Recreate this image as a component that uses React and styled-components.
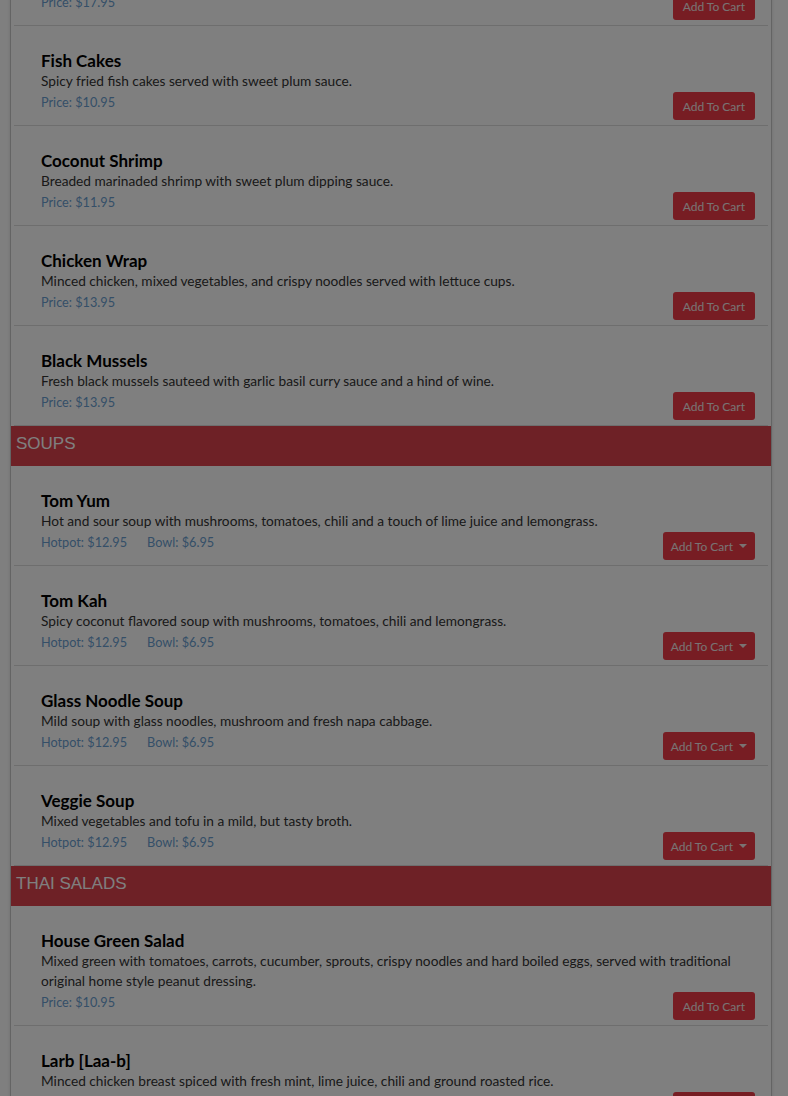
import React from 'react';
import styled, { createGlobalStyle } from 'styled-components';

const GlobalStyle = createGlobalStyle`
  html, body {
    margin: 0;
    padding: 0;
    background: #fff;
    overflow: hidden;
  }
  body {
    font-family: Lato, "Open Sans", sans-serif;
    color: #333;
  }
`;

const Page = styled.div`
  width: 788px;
  height: 1096px;
  overflow: hidden;
  position: relative;
`;

/* page is scrolled part way down the menu */
const MenuCard = styled.div`
  margin: -74px 0 0 10px;
  width: 760px;
  border-left: 1px solid #c8c8c8;
  border-right: 1px solid #c8c8c8;
  box-shadow: 0 0 4px rgba(0, 0, 0, 0.12);
  background: #fff;
`;

const CategoryHeader = styled.div`
  background: #dc424c;
  color: #fff;
  height: 40px;
  padding: 8px 5px 0;
  box-sizing: border-box;
  font-family: "Liberation Sans", Arial, sans-serif;
  font-size: 17px;
  line-height: 20px;
`;

const Item = styled.div`
  margin: 0 3px;
  padding: 25px 13px 5px 27px;
  border-bottom: 1px solid #dcdcdc;
`;

const Title = styled.div`
  font-size: 17px;
  font-weight: 700;
  line-height: 20px;
  color: #000;
`;

const Desc = styled.div`
  font-size: 13.7px;
  line-height: 20px;
  color: #333;
`;

const Row = styled.div`
  display: flex;
  justify-content: space-between;
  align-items: flex-start;
  margin-top: 1px;
  height: 28px;
`;

const Prices = styled.div`
  display: flex;
  gap: 20px;
  font-size: 12.7px;
  line-height: 20px;
  color: #6a9ed0;
`;

const CartButton = styled.button`
  display: flex;
  align-items: center;
  height: 28px;
  padding: 0 ${(p) => (p.$menu ? 8 : 10)}px;
  border: none;
  border-radius: 3px;
  background: #ee3a46;
  color: #f2e6e6;
  font-family: inherit;
  font-size: 12px;
  cursor: pointer;
`;

const Caret = styled.span`
  width: 0;
  height: 0;
  margin-left: 6px;
  border-top: 4px solid #f2e6e6;
  border-left: 4px solid transparent;
  border-right: 4px solid transparent;
`;

const Backdrop = styled.div`
  position: fixed;
  inset: 0;
  background: rgba(0, 0, 0, 0.5);
`;

const menu = [
  {
    items: [
      { name: 'Crispy Duck Rolls', desc: 'Crispy rolls with duck and vegetables.', prices: ['Price: $17.95'] },
      { name: 'Fish Cakes', desc: 'Spicy fried fish cakes served with sweet plum sauce.', prices: ['Price: $10.95'] },
      { name: 'Coconut Shrimp', desc: 'Breaded marinaded shrimp with sweet plum dipping sauce.', prices: ['Price: $11.95'] },
      { name: 'Chicken Wrap', desc: 'Minced chicken, mixed vegetables, and crispy noodles served with lettuce cups.', prices: ['Price: $13.95'] },
      { name: 'Black Mussels', desc: 'Fresh black mussels sauteed with garlic basil curry sauce and a hind of wine.', prices: ['Price: $13.95'] },
    ],
  },
  {
    title: 'SOUPS',
    items: [
      { name: 'Tom Yum', desc: 'Hot and sour soup with mushrooms, tomatoes, chili and a touch of lime juice and lemongrass.', prices: ['Hotpot: $12.95', 'Bowl: $6.95'] },
      { name: 'Tom Kah', desc: 'Spicy coconut flavored soup with mushrooms, tomatoes, chili and lemongrass.', prices: ['Hotpot: $12.95', 'Bowl: $6.95'] },
      { name: 'Glass Noodle Soup', desc: 'Mild soup with glass noodles, mushroom and fresh napa cabbage.', prices: ['Hotpot: $12.95', 'Bowl: $6.95'] },
      { name: 'Veggie Soup', desc: 'Mixed vegetables and tofu in a mild, but tasty broth.', prices: ['Hotpot: $12.95', 'Bowl: $6.95'] },
    ],
  },
  {
    title: 'THAI SALADS',
    items: [
      { name: 'House Green Salad', desc: 'Mixed green with tomatoes, carrots, cucumber, sprouts, crispy noodles and hard boiled eggs, served with traditional original home style peanut dressing.', prices: ['Price: $10.95'] },
      { name: 'Larb [Laa-b]', desc: 'Minced chicken breast spiced with fresh mint, lime juice, chili and ground roasted rice.', prices: ['Price: $11.95'] },
    ],
  },
];

const MenuItem = ({ item }) => {
  const multi = item.prices.length > 1;
  return (
    <Item>
      <Title>{item.name}</Title>
      <Desc>{item.desc}</Desc>
      <Row>
        <Prices>
          {item.prices.map((p) => (
            <span key={p}>{p}</span>
          ))}
        </Prices>
        <CartButton $menu={multi}>
          Add To Cart
          {multi && <Caret />}
        </CartButton>
      </Row>
    </Item>
  );
};

export default function App() {
  return (
    <Page>
      <GlobalStyle />
      <MenuCard>
        {menu.map((section, i) => (
          <div key={i}>
            {section.title && <CategoryHeader>{section.title}</CategoryHeader>}
            {section.items.map((item) => (
              <MenuItem key={item.name} item={item} />
            ))}
          </div>
        ))}
      </MenuCard>
      <Backdrop />
    </Page>
  );
}
